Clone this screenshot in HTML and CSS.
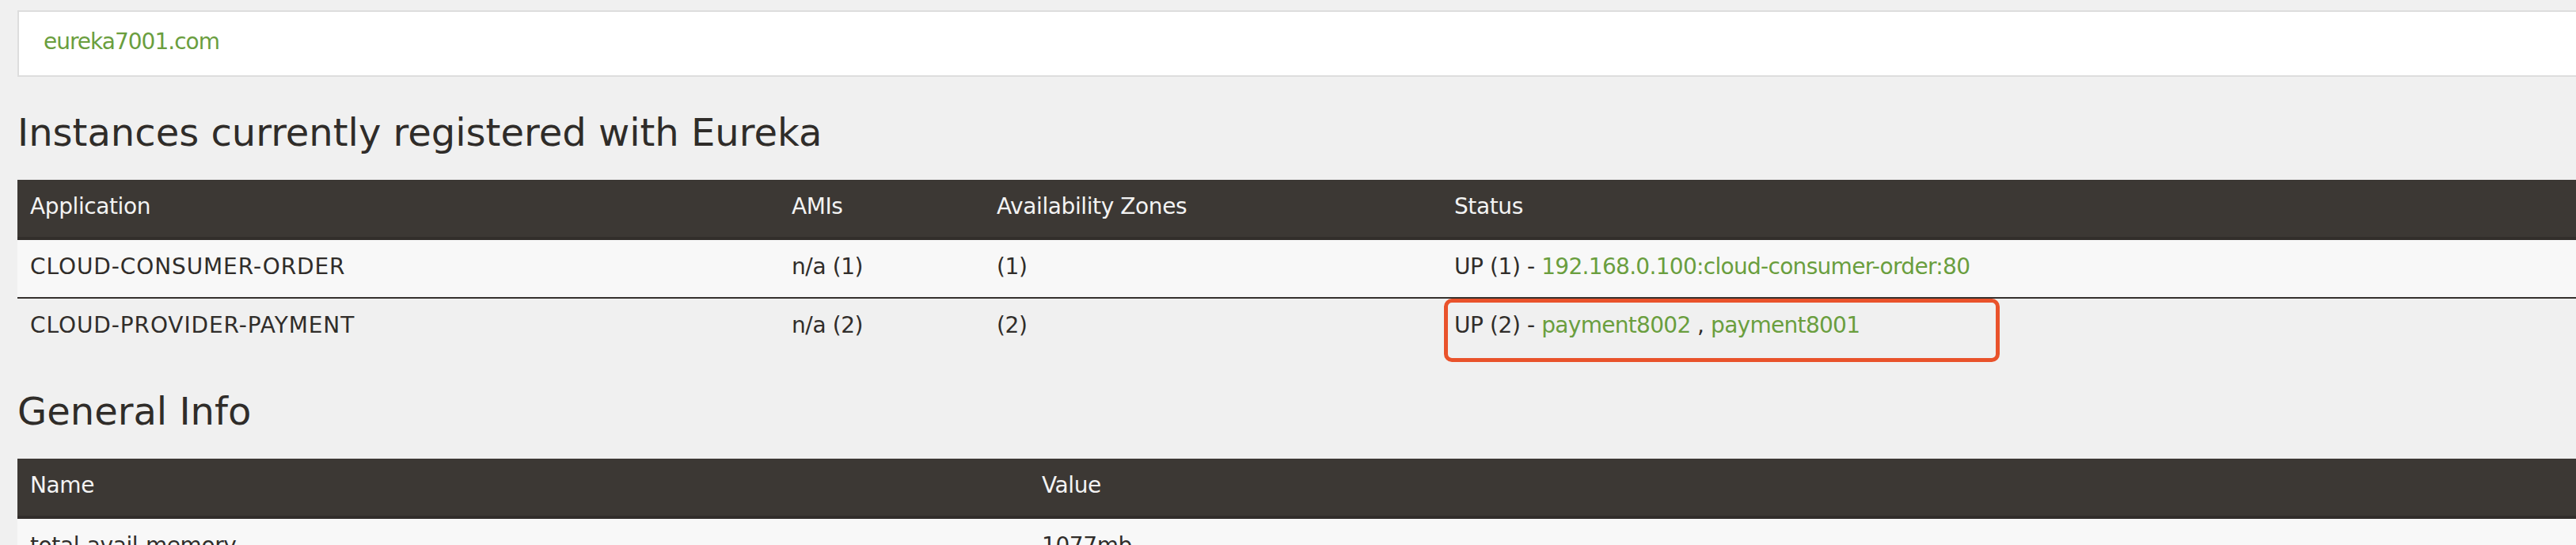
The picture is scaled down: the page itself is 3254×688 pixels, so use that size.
FILE: index.html
```html
<!DOCTYPE html>
<html lang="en">
<head>
<meta charset="utf-8">
<title>Eureka</title>
<link rel="stylesheet" href="styles.css">
</head>
<body>
<div class="page">
  <div class="hostbox"><a class="link" href="#">eureka7001.com</a></div>

  <h2 class="section-title">Instances currently registered with Eureka</h2>
  <table class="grid">
    <colgroup>
      <col class="c-app"><col class="c-ami"><col class="c-zone"><col>
    </colgroup>
    <thead>
      <tr><th>Application</th><th>AMIs</th><th>Availability Zones</th><th>Status</th></tr>
    </thead>
    <tbody>
      <tr class="odd">
        <td class="app">CLOUD-CONSUMER-ORDER</td>
        <td>n/a (1)</td>
        <td>(1)</td>
        <td>UP (1) - <a class="link" href="#">192.168.0.100:cloud-consumer-order:80</a></td>
      </tr>
      <tr>
        <td class="app">CLOUD-PROVIDER-PAYMENT</td>
        <td>n/a (2)</td>
        <td>(2)</td>
        <td class="marked">UP (2) - <a class="link" href="#">payment8002</a> , <a class="link" href="#">payment8001</a><span class="highlight"></span></td>
      </tr>
    </tbody>
  </table>

  <h2 class="section-title">General Info</h2>
  <table class="grid">
    <colgroup>
      <col class="c-name"><col>
    </colgroup>
    <thead>
      <tr><th>Name</th><th>Value</th></tr>
    </thead>
    <tbody>
      <tr class="odd"><td>total-avail-memory</td><td>1077mb</td></tr>
      <tr><td>environment</td><td>test</td></tr>
    </tbody>
  </table>
</div>
</body>
</html>
```

FILE: styles.css
```css
html, body {
  margin: 0;
  overflow: hidden;
}

body {
  background: #f0f0f0;
  color: #302d2a;
  font-family: "DejaVu Sans", "Liberation Sans", sans-serif;
  font-size: 28px;
  line-height: 40px;
  letter-spacing: -0.4px;
}

.page {
  width: 3400px;
  padding: 13px 0 0 22px;
}

.link {
  color: #6a9e3e;
  text-decoration: none;
  letter-spacing: -0.7px;
}

.hostbox {
  background: #ffffff;
  border: 2px solid #dddddd;
  padding: 18px 31px 22px;
}

.hostbox .link {
  letter-spacing: -1px;
}

.section-title {
  font-size: 48px;
  font-weight: normal;
  line-height: 53px;
  margin: 44px 0 33px;
  color: #2f2c29;
  letter-spacing: 0;
}

.grid {
  width: 3378px;
  border-collapse: collapse;
  table-layout: fixed;
}

.c-app { width: 962px; }
.c-ami { width: 259px; }
.c-zone { width: 578px; }
.c-name { width: 1278px; }

.grid th {
  background: #3c3834;
  color: #f3f3f3;
  font-weight: normal;
  text-align: left;
  padding: 14px 16px 18px;
  border-bottom: 4px solid #322e2b;
}

.grid td {
  padding: 14px 16px 18px;
  white-space: nowrap;
}

.grid td.app {
  letter-spacing: 0.9px;
}

.grid tr.odd td {
  background: #f8f8f8;
}

.grid tbody tr + tr td {
  border-top: 2px solid #35312e;
}

.marked {
  position: relative;
}

.highlight {
  position: absolute;
  left: 3px;
  top: 0;
  width: 702px;
  height: 80px;
  box-sizing: border-box;
  border: 5px solid #e9522b;
  border-radius: 10px;
}
```
